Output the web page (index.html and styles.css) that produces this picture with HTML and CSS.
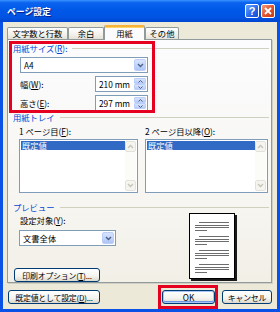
FILE: index.html
```html
<!DOCTYPE html>
<html lang="ja">
<head>
<meta charset="utf-8">
<title>ページ設定</title>
<link rel="stylesheet" href="styles.css">
</head>
<body>
<div class="window">
  <div class="titlebar">
    <span class="title">ページ設定</span>
    <span class="tb-btn help">?</span>
    <span class="tb-btn close"><svg width="8" height="8" viewBox="0 0 8 8"><path d="M1 1L7 7M7 1L1 7" stroke="#fff" stroke-width="1.8"/></svg></span>
  </div>
  <div class="frame">
    <div class="tabs">
      <div class="tab t1">文字数と行数</div>
      <div class="tab t2">余白</div>
      <div class="tab t3 active">用紙</div>
      <div class="tab t4">その他</div>
    </div>
    <div class="panel">
      <div class="ghead">用紙サイズ(<u>R</u>):</div>
      <div class="sec1">
        <div class="combo c-size"><span class="val">A4</span><span class="dd"><svg width="7" height="5" viewBox="0 0 7 5"><path d="M1 1l2.5 2.5L6 1" fill="none" stroke="#4d6185" stroke-width="1.4"/></svg></span></div>
        <div class="row"><span class="lbl">幅(<u>W</u>):</span><div class="spin"><span class="val">210 mm</span><span class="sb"><span class="sbb"><svg width="5" height="3" viewBox="0 0 5 3"><path d="M0.5 2.5l2-2l2 2" fill="none" stroke="#4d6185" stroke-width="1"/></svg></span><span class="sbb"><svg width="5" height="3" viewBox="0 0 5 3"><path d="M0.5 0.5l2 2l2-2" fill="none" stroke="#4d6185" stroke-width="1"/></svg></span></span></div></div>
        <div class="row"><span class="lbl">高さ(<u>E</u>):</span><div class="spin"><span class="val">297 mm</span><span class="sb"><span class="sbb"><svg width="5" height="3" viewBox="0 0 5 3"><path d="M0.5 2.5l2-2l2 2" fill="none" stroke="#4d6185" stroke-width="1"/></svg></span><span class="sbb"><svg width="5" height="3" viewBox="0 0 5 3"><path d="M0.5 0.5l2 2l2-2" fill="none" stroke="#4d6185" stroke-width="1"/></svg></span></span></div></div>
      </div>
      <div class="ghead g2">用紙トレイ</div>
      <div class="sec2">
        <div class="col col1">
          <div class="lbl">1 ページ目(<u>F</u>):</div>
          <div class="list">
            <div class="items"><div class="sel">既定値</div></div>
            <div class="vscroll"><span class="sbtn"><svg width="7" height="5" viewBox="0 0 7 5"><path d="M1 4l2.5-2.5L6 4" fill="none" stroke="#c4c3b8" stroke-width="1.3"/></svg></span><span class="track"></span><span class="sbtn"><svg width="7" height="5" viewBox="0 0 7 5"><path d="M1 1l2.5 2.5L6 1" fill="none" stroke="#c4c3b8" stroke-width="1.3"/></svg></span></div>
          </div>
        </div>
        <div class="col col2">
          <div class="lbl">2 ページ目以降(<u>O</u>):</div>
          <div class="list">
            <div class="items"><div class="sel">既定値</div></div>
            <div class="vscroll"><span class="sbtn"><svg width="7" height="5" viewBox="0 0 7 5"><path d="M1 4l2.5-2.5L6 4" fill="none" stroke="#c4c3b8" stroke-width="1.3"/></svg></span><span class="track"></span><span class="sbtn"><svg width="7" height="5" viewBox="0 0 7 5"><path d="M1 1l2.5 2.5L6 1" fill="none" stroke="#c4c3b8" stroke-width="1.3"/></svg></span></div>
          </div>
        </div>
      </div>
      <div class="ghead g3">プレビュー</div>
      <div class="sec3">
        <div class="left">
          <div class="lbl">設定対象(<u>Y</u>):</div>
          <div class="combo c-target"><span class="val">文書全体</span><span class="dd"><svg width="7" height="5" viewBox="0 0 7 5"><path d="M1 1l2.5 2.5L6 1" fill="none" stroke="#4d6185" stroke-width="1.4"/></svg></span></div>
          <div class="btn b-print">印刷オプション(<u>T</u>)...</div>
        </div>
        <div class="page">
          <svg width="44" height="64" viewBox="0 0 44 64">
            <g stroke="#6d6d6d" stroke-width="1">
              <path d="M9 8.5H39M5 11.5H39M5 13.5H39M5 16.5H17"/>
              <path d="M9 22.5H39M5 25.5H39M5 27.5H39M5 30.5H17"/>
              <path d="M9 36.5H39M5 39.5H39M5 41.5H39M5 44.5H17"/>
              <path d="M9 50.5H39M5 53.5H39M5 55.5H39M5 58.5H17"/>
            </g>
          </svg>
        </div>
      </div>
    </div>
    <div class="footer">
      <div class="btn b-default">既定値として設定(<u>D</u>)...</div>
      <div class="btn b-ok">OK</div>
      <div class="btn b-cancel">キャンセル</div>
    </div>
  </div>
  <div class="mark mark-size"></div>
  <div class="mark mark-ok"></div>
</div>
</body>
</html>
```

FILE: styles.css
```css
* { box-sizing: border-box; margin: 0; padding: 0; }
html, body { width: 280px; height: 312px; overflow: hidden; }
body {
  font-family: "Noto Sans CJK JP", sans-serif;
  font-size: 8.3px;
  line-height: 9px;
  color: #000;
  background: #fff;
}
u { text-decoration: underline; text-underline-offset: 1px; }

.window {
  position: relative;
  width: 280px;
  height: 312px;
  display: flex;
  flex-direction: column;
}

.titlebar {
  height: 22px;
  flex: none;
  display: flex;
  align-items: center;
  padding: 0 5px 0 7px;
  background: linear-gradient(#3a93ff 0%, #0b63f0 12%, #0058e8 45%, #0053e2 80%, #0045d2 100%);
}
.title {
  flex: 1;
  color: #fff;
  font-weight: bold;
  font-size: 8.8px;
  text-shadow: 1px 1px 0 #0a1e8c;
  padding-top: 1px;
}
.tb-btn {
  width: 14px;
  height: 14px;
  border: 1px solid #fff;
  border-radius: 2px;
  display: flex;
  align-items: center;
  justify-content: center;
  color: #fff;
  font: bold 11px/1 "Liberation Sans", sans-serif;
}
.help {
  background: linear-gradient(135deg, #6aa6ff, #2563e8 60%, #1a4fd0);
  margin-right: 2px;
}
.close {
  background: linear-gradient(135deg, #f39a7a, #e0522c 55%, #c23a16);
}

.frame {
  flex: 1;
  display: flex;
  flex-direction: column;
  background: #ece9d8;
  border: 3px solid #0a52e6;
  border-top: 0;
}

.tabs {
  height: 17px;
  flex: none;
  display: flex;
  align-items: flex-end;
  padding-left: 4px;
}
.tab {
  height: 12px;
  border: 1px solid #919b9c;
  border-bottom: 0;
  border-radius: 2px 2px 0 0;
  background: linear-gradient(#ffffff, #f1f0ea 60%, #e4e2d8);
  display: flex;
  align-items: center;
  justify-content: center;
}
.t1 { width: 61px; }
.t2 { width: 36px; }
.t3 { width: 41px; }
.t4 { width: 34px; }
.tab.active {
  height: 15px;
  margin-bottom: -1px;
  z-index: 1;
  background: #fcfcfe;
  border-top: 2px solid #f7b23a;
  box-shadow: inset 0 1px 0 #ffd36b;
}

.panel {
  height: 244px;
  flex: none;
  margin: 0 5px 0 4px;
  border: 1px solid #919b9c;
  background: linear-gradient(#fcfcfe, #f6f5f0 70%, #f1efe6);
  box-shadow: 1px 1px 0 #d2d0c4;
  padding: 4px 0 0 5px;
  display: flex;
  flex-direction: column;
}

.ghead {
  height: 9px;
  display: flex;
  align-items: center;
  color: #0046d5;
}
.ghead::after {
  content: "";
  flex: 1;
  height: 1px;
  background: #d0d0bf;
  margin: 0 2px 0 5px;
}

.sec1 {
  padding-left: 7px;
  display: flex;
  flex-direction: column;
  gap: 3px;
}
.combo {
  height: 16px;
  border: 1px solid #7f9db9;
  background: #fff;
  display: flex;
  align-items: center;
  padding: 1px 1px 1px 3px;
}
.combo .val { flex: 1; }
.c-size { width: 128px; margin-top: 4px; }
.dd {
  width: 12px;
  height: 12px;
  border: 1px solid #bccffa;
  border-radius: 2px;
  background: linear-gradient(#d8e4fd, #bfd2fb 60%, #adc4f5);
  display: flex;
  align-items: center;
  justify-content: center;
}

.row {
  width: 128px;
  height: 16px;
  display: flex;
  align-items: center;
  justify-content: space-between;
}
.spin {
  width: 53px;
  height: 16px;
  border: 1px solid #7f9db9;
  background: #fff;
  display: flex;
  align-items: center;
  padding: 1px 1px 1px 3px;
}
.spin .val { flex: 1; }
.sb {
  width: 12px;
  height: 12px;
  display: flex;
  flex-direction: column;
}
.sbb {
  flex: 1;
  border: 1px solid #bccffa;
  border-radius: 1px;
  background: linear-gradient(#d8e4fd, #b7cbf7);
  display: flex;
  align-items: center;
  justify-content: center;
}

.g2 { margin-top: 2px; }
.sec2 {
  display: flex;
  padding-left: 6px;
  gap: 7px;
}
.col { display: flex; flex-direction: column; }
.col1 { width: 119px; }
.col2 { width: 123px; }
.col .lbl { margin-top: 5px; height: 9px; }
.list {
  margin-top: 3px;
  height: 54px;
  border: 1px solid #7f9db9;
  background: #fff;
  display: flex;
  padding: 1px;
}
.items { flex: 1; }
.sel {
  height: 9px;
  background: #316ac5;
  color: #fff;
  padding-left: 1px;
  line-height: 9px;
}
.vscroll {
  width: 11px;
  display: flex;
  flex-direction: column;
}
.sbtn {
  height: 11px;
  border: 1px solid #e3e2da;
  border-radius: 2px;
  background: #f5f4ef;
  display: flex;
  align-items: center;
  justify-content: center;
}
.track { flex: 1; background: #fbfbf8; }

.g3 { margin-top: 10px; }
.sec3 {
  display: flex;
  align-items: flex-start;
}
.left {
  padding-left: 6px;
  display: flex;
  flex-direction: column;
}
.left .lbl { margin-top: 4px; height: 9px; padding-left: 1px; }
.c-target { width: 97px; margin-top: 5px; }
.b-print { width: 86px; height: 13px; margin-top: 22px; margin-left: -5px; }

.page {
  margin: 1px 36px 0 auto;
  width: 46px;
  height: 66px;
  border: 1px solid #000;
  background: #fff;
  box-shadow: 2px 2px 0 #1a1a1a;
  display: flex;
}

.btn {
  height: 14px;
  border: 1px solid #003c74;
  border-radius: 3px;
  background: linear-gradient(#ffffff, #f4f3ee 60%, #dcd8cc);
  display: flex;
  align-items: center;
  justify-content: center;
  font-size: 7.9px;
  letter-spacing: -0.2px;
  white-space: nowrap;
}

.footer {
  display: flex;
  padding: 7px 5px 0 5px;
}
.b-default { width: 92px; }
.b-ok {
  width: 53px;
  margin-left: auto;
  box-shadow: inset 0 0 0 1px #a9c5f5, inset 0 -1px 0 1px #6e98e6;
  font-size: 8.3px;
  letter-spacing: 0;
}
.b-cancel { width: 50px; margin-left: 7px; }

.mark {
  position: absolute;
  border: 3px solid #e4001e;
}
.mark-size { left: 9px; top: 41px; width: 146px; height: 72px; }
.mark-ok { left: 158px; top: 285px; width: 60px; height: 24px; }
```
